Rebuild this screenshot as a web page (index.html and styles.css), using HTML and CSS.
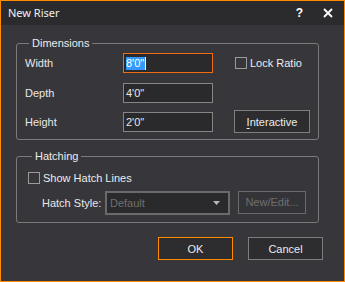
FILE: index.html
```html
<!DOCTYPE html>
<html>
<head>
<meta charset="utf-8">
<link rel="stylesheet" href="styles.css">
</head>
<body>
<div class="window">
  <div class="titlebar">
    <span class="title">New Riser</span>
    <span class="help">?</span>
    <svg class="close" width="10" height="10" viewBox="0 0 10 10"><path d="M1 1 L9 9 M9 1 L1 9" stroke="#ffffff" stroke-width="1.8" fill="none"/></svg>
  </div>
  <div class="content">
    <fieldset class="group dims">
      <legend>Dimensions</legend>
      <div class="grid">
        <span class="label">Width</span>
        <div class="field focused"><span class="sel">8'0"</span><span class="caret"></span></div>
        <label class="check side"><span class="box"></span>Lock Ratio</label>

        <span class="label">Depth</span>
        <div class="field">4'0"</div>
        <span></span>

        <span class="label">Height</span>
        <div class="field">2'0"</div>
        <div class="btn interactive"><u>I</u>nteractive</div>
      </div>
    </fieldset>
    <fieldset class="group hatch">
      <legend>Hatching</legend>
      <label class="check show"><span class="box"></span>Show Hatch Lines</label>
      <div class="hrow">
        <span class="label">Hatch Style:</span>
        <div class="combo"><span>Default</span><svg width="7" height="4" viewBox="0 0 7 4"><path d="M0 0 H7 L3.5 4 Z" fill="#b8b8b8"/></svg></div>
        <div class="btn disabled">New/Edit...</div>
      </div>
    </fieldset>
    <div class="actions">
      <div class="btn ok">OK</div>
      <div class="btn">Cancel</div>
    </div>
  </div>
</div>
</body>
</html>
```
FILE: styles.css
```css
* { box-sizing: border-box; }
html, body { margin: 0; padding: 0; background: #37363b; }
body { font-family: "Liberation Sans", Arial, sans-serif; font-size: 11px; color: #e8e8e8; }

.window {
  width: 345px; height: 282px;
  border: 1px solid #ff8c00;
  background: #37363b;
  display: flex; flex-direction: column;
}
.titlebar {
  height: 24px; background: #2b2b2e;
  display: flex; align-items: center;
  padding: 0 11px 0 7px;
}
.title { font-family: "Noto Sans", sans-serif; font-size: 11px; color: #f0f0f0; flex: 1; margin-top: -1px; }
.help { font-family: "Liberation Sans", sans-serif; font-weight: bold; font-size: 12px; color: #ffffff; margin-right: 20px; }
.close { display: block; }

.content { flex: 1; padding: 11px 21px 0 15px; display: flex; flex-direction: column; }

.group {
  margin: 0 4px 0 0; padding: 0;
  border: 1px solid #7a7a7a; border-radius: 3px;
  min-width: 0;
}
.group legend {
  padding: 0 3px; margin-left: 4px;
  line-height: 14px; height: 14px; color: #ececec;
}
.dims { padding: 3px 0 7px 8px; }
.grid {
  display: grid;
  grid-template-columns: 98px 90px 96px;
  column-gap: 0;
  grid-template-rows: 30px 29px 20px;
  align-items: start;
}
.label { line-height: 20px; }
.field {
  height: 20px; border: 1px solid #858585; background: #2a2a2c;
  padding: 0 2px; line-height: 18px; color: #e8e8e8;
  display: flex; align-items: center;
}
.field.focused { border-color: #f26a12; }
.sel { background: #3399ff; color: #ffffff; line-height: 13px; padding-right: 1px; }
.caret { width: 1px; height: 13px; background: #f4f4f4; }

.check { display: flex; align-items: center; color: #ececec; }
.box { width: 12px; height: 12px; border: 1px solid #9a9a9a; margin-right: 3px; background: transparent; }
.grid .side { height: 20px; margin-left: 22px; }

.btn {
  border: 1px solid #7d7d7d; background: #2d2d30;
  display: flex; align-items: center; justify-content: center;
  height: 23px; color: #ececec;
}
.interactive { margin-top: -2px; margin-left: 21px; width: 76px; }
.interactive u { text-decoration-thickness: 1px; text-underline-offset: 2px; }

.hatch { margin-top: 9px; padding: 8px 0 7px 11px; }
.show { height: 14px; }
.hrow { display: flex; align-items: center; margin-top: 6px; padding-left: 14px; }
.hrow .label { width: 63px; }
.combo {
  width: 125px; height: 24px;
  border: 2px solid #6a6a6a; background: #2a2a2c;
  display: flex; align-items: center; justify-content: space-between;
  padding: 0 8px 0 3px; color: #6f6f6f;
}
.combo svg { display: block; }
.btn.disabled { width: 68px; margin-left: 8px; margin-top: -2px; color: #6f6f6f; border-color: #6a6a6a; background: #343438; }

.actions { display: flex; justify-content: flex-end; gap: 15px; margin-top: 14px; }
.actions .btn { width: 75px; }
.btn.ok { border-color: #ff8c00; }
```
